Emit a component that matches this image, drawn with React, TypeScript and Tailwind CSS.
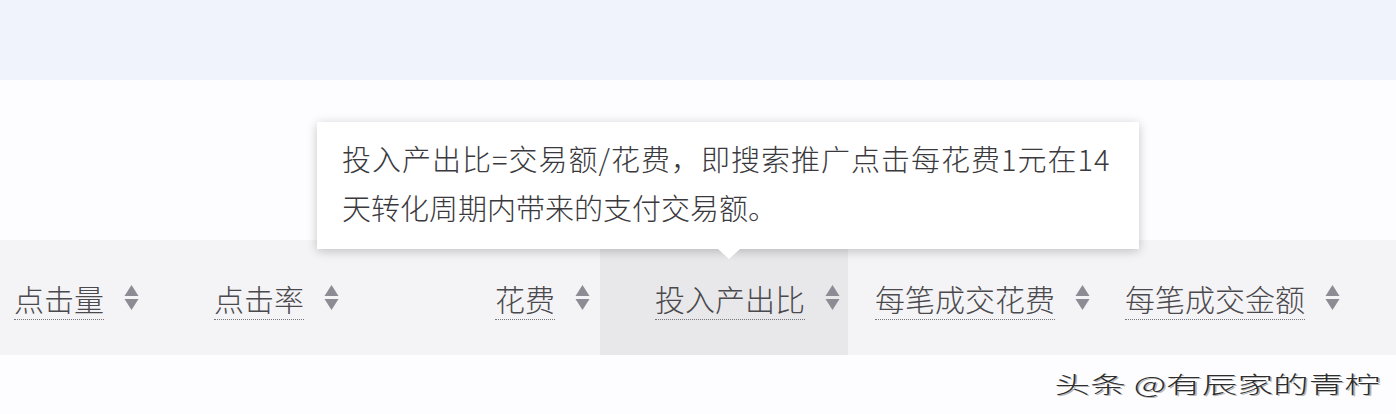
import React from "react";

type Col = { label: string; width: string; align: string; active?: boolean };

const columns: Col[] = [
  { label: "点击量", width: "w-[200px]", align: "justify-start pl-[14px]" },
  { label: "点击率", width: "w-[200px]", align: "justify-start pl-[14px]" },
  { label: "花费", width: "w-[200px]", align: "justify-end pr-[10px]" },
  { label: "投入产出比", width: "w-[248px]", align: "justify-end pr-[8px]", active: true },
  { label: "每笔成交花费", width: "w-[252px]", align: "justify-end pr-[10px]" },
  { label: "每笔成交金额", width: "w-[252px]", align: "justify-end pr-[12px]" },
];

const SortIcon: React.FC = () => (
  <svg width="15" height="26" viewBox="0 0 15 26" className="shrink-0">
    <polygon points="7.5,0 14.5,11 0.5,11" fill="#8d8b93" />
    <polygon points="0.5,14 14.5,14 7.5,25" fill="#8d8b93" />
  </svg>
);

const App: React.FC = () => {
  return (
    <div
      className="relative w-[1396px] h-[414px] overflow-hidden bg-[#fdfcfe]"
      style={{ fontFamily: '"Noto Sans CJK SC", "Noto Sans", sans-serif' }}
    >
      <div className="h-[80px] bg-[#f0f2fc]" />
      <div className="h-[160px]" />

      {/* header row */}
      <div className="flex h-[115px] bg-[#f4f3f5]">
        {columns.map((c) => (
          <div
            key={c.label}
            className={`flex items-center gap-[20px] ${c.width} ${c.align} ${
              c.active ? "bg-[#e8e7e9]" : ""
            }`}
          >
            <span className="text-[30px] leading-[36px] font-light text-[#4a494d] border-b border-dotted border-[#77767b] pb-[3px] mt-[5px]">
              {c.label}
            </span>
            <SortIcon />
          </div>
        ))}
      </div>

      {/* watermark */}
      <div className="flex justify-end pr-[16px] pt-[14px]">
        <span className="origin-right scale-x-[1.55] text-[23px] leading-[28px] font-light text-[#2e2e2e] [text-shadow:-1px_-1px_0_#ffffff,1px_1px_0_#b5b5b5]">
          头条 @有辰家的青柠
        </span>
      </div>

      {/* tooltip */}
      <div className="absolute left-[317px] top-[122px] w-[822px] h-[127px] bg-white shadow-[0_2px_10px_rgba(0,0,0,0.22)] px-[25px] pt-[12px]">
        <p className="text-[29px] leading-[49px] font-light text-[#3a393d]">
          <span className="tracking-[1px]">投入产出比=交易额/花费，即搜索推广点击每花费1元在14</span>
          <br />
          天转化周期内带来的支付交易额。
        </p>
        <div className="absolute left-[401px] -bottom-[10px] w-0 h-0 border-l-[11px] border-r-[11px] border-t-[10px] border-l-transparent border-r-transparent border-t-white" />
      </div>
    </div>
  );
};

export default App;
